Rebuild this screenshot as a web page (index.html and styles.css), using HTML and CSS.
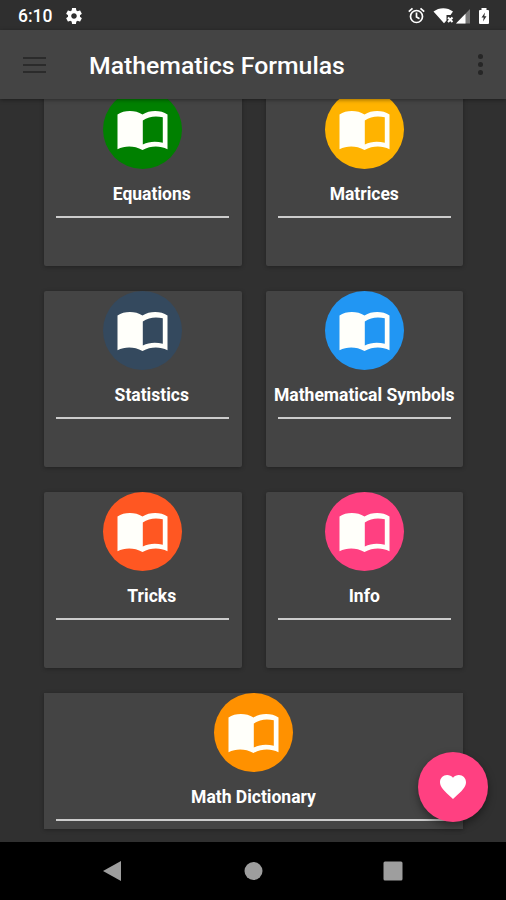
FILE: index.html
```html
<!DOCTYPE html>
<html lang="en">
<head>
    <meta charset="UTF-8">
    <title>Mathematics Formulas</title>
    <link rel="stylesheet" href="styles.css">
</head>
<body>
    <svg class="defs">
        <symbol id="book" viewBox="0 0 51 39">
            <path fill="currentColor" fill-rule="evenodd" d="M.5 3.500C7-.8 18-1.200 25.500 3.500C33-1.200 44-.8 50.500 3.500V38.200C43 34.700 34 34.500 25.500 39C17 34.500 8 34.700 .5 38.200ZM25.800 9.500V33.500C32 30.300 39 29.900 45.800 31.800V6.300C38.500 4.600 31.500 5.500 25.800 9.500Z"/>
        </symbol>
    </svg>

    <div class="status-bar">
        <span class="clock">6:10</span>
        <svg class="gear" viewBox="2 2 20 20"><path fill="#fff" d="M19.430 12.980c.04-.32.07-.64.07-.98s-.03-.66-.07-.98l2.110-1.650c.19-.15.24-.42.12-.64l-2-3.460c-.12-.22-.39-.3-.61-.22l-2.490 1c-.52-.4-1.080-.73-1.690-.98l-.38-2.650C14.460 2.180 14.250 2 14 2h-4c-.25 0-.46.18-.49.42l-.38 2.650c-.61.25-1.170.59-1.690.98l-2.490-1c-.23-.09-.49 0-.61.22l-2 3.460c-.13.22-.07.49.12.64l2.110 1.650c-.04.32-.07.65-.07.98s.03.66.07.98l-2.110 1.650c-.19.15-.24.42-.12.64l2 3.460c.12.22.39.3.61.22l2.490-1c.52.4 1.080.73 1.690.98l.38 2.650c.03.24.24.42.49.42h4c.25 0 .46-.18.49-.42l.38-2.650c.61-.25 1.170-.59 1.690-.98l2.490 1c.23.09.49 0 .61-.22l2-3.460c.12-.22.07-.49-.12-.64l-2.110-1.650zM12 15.500c-1.930 0-3.500-1.570-3.500-3.500s1.570-3.500 3.500-3.500 3.500 1.570 3.500 3.500-1.570 3.500-3.500 3.500z"/></svg>
        <svg class="system-icons" viewBox="0 0 84 20">
            <!-- alarm -->
            <g fill="none" stroke="#fff" stroke-width="1.700">
                <circle cx="8.500" cy="10.500" r="6"/>
                <path d="M.8 5.600L4.500 2.300M16.200 5.600L12.500 2.300M8.500 6.500V11L11.500 12.800"/>
            </g>
            <!-- wifi -->
            <path fill="#fff" d="M25.500 5.500C31 1 39.500 1 45 5.500L42.500 9H38.500V14.500L36 17.300Z"/>
            <path stroke="#fff" stroke-width="2" d="M40 11.500L44.500 16M44.500 11.500L40 16"/>
            <!-- signal -->
            <path fill="#777" d="M62 3V17.500H48Z"/>
            <path fill="#fff" d="M57.500 7.700V17.500H48Z"/>
            <!-- battery -->
            <path fill="#fff" d="M73.500 2H78.500V4H80Q81 4 81 5V17Q81 18 80 18H72Q71 18 71 17V5Q71 4 72 4H73.500Z"/>
            <path fill="#2f2f2f" d="M77 6.500L73.500 11.500H75.700L75 15.500L78.500 10.200H76.300Z"/>
        </svg>
    </div>

    <header class="toolbar">
        <div class="menu-icon"><i></i><i></i><i></i></div>
        <h1>Mathematics Formulas</h1>
        <div class="more-icon"><i></i><i></i><i></i></div>
    </header>

    <main>
        <div class="grid">
            <div class="card left">
                <div class="circle green"><svg class="book"><use href="#book"/></svg></div>
                <h2>Equations</h2>
                <hr>
            </div>
            <div class="card">
                <div class="circle amber"><svg class="book"><use href="#book"/></svg></div>
                <h2>Matrices</h2>
                <hr>
            </div>
            <div class="card left">
                <div class="circle navy"><svg class="book"><use href="#book"/></svg></div>
                <h2>Statistics</h2>
                <hr>
            </div>
            <div class="card">
                <div class="circle blue"><svg class="book"><use href="#book"/></svg></div>
                <h2>Mathematical Symbols</h2>
                <hr>
            </div>
            <div class="card left">
                <div class="circle red"><svg class="book"><use href="#book"/></svg></div>
                <h2>Tricks</h2>
                <hr>
            </div>
            <div class="card">
                <div class="circle pink"><svg class="book"><use href="#book"/></svg></div>
                <h2>Info</h2>
                <hr>
            </div>
            <div class="card wide">
                <div class="circle orange"><svg class="book"><use href="#book"/></svg></div>
                <h2>Math Dictionary</h2>
                <hr>
            </div>
        </div>
        <div class="fab">
            <svg viewBox="2 3 20 18.350"><path fill="#fff" d="M12 21.350l-1.450-1.320C5.400 15.360 2 12.280 2 8.500 2 5.420 4.420 3 7.500 3c1.740 0 3.410.81 4.500 2.090C13.090 3.810 14.760 3 16.500 3 19.580 3 22 5.420 22 8.500c0 3.780-3.400 6.860-8.550 11.540L12 21.350z"/></svg>
        </div>
    </main>

    <nav class="nav-bar">
        <svg viewBox="0 0 20 22"><path d="M18 1V21L0 11Z"/></svg>
        <svg viewBox="0 0 20 22"><circle cx="10.500" cy="11" r="9"/></svg>
        <svg viewBox="0 0 20 22"><rect x=".5" y="1.500" width="19" height="19" rx="1.500"/></svg>
    </nav>
</body>
</html>
```
FILE: styles.css
```css
* {
    box-sizing: border-box;
}

body {
    margin: 0;
    height: 900px;
    display: flex;
    flex-direction: column;
    overflow: hidden;
    background: #303030;
    color: #fff;
    font-family: Roboto, sans-serif;
}

.defs {
    display: none;
}

.status-bar {
    height: 30px;
    flex: none;
    display: flex;
    align-items: center;
    padding: 2px 14px 0 18px;
    background: #2f2f2f;
}

.clock {
    width: 48px;
    font-size: 17.5px;
    font-weight: 500;
}

.gear {
    width: 16px;
    height: 16px;
}

.system-icons {
    width: 84px;
    height: 20px;
    margin-left: auto;
}

.toolbar {
    position: relative;
    z-index: 1;
    height: 69px;
    flex: none;
    display: flex;
    align-items: center;
    padding: 0 23px;
    background: #444;
    box-shadow: 0 1px 4px rgba(0, 0, 0, 0.4);
}

.toolbar h1 {
    margin: 2px 0 0 43px;
    font-size: 24.8px;
    font-weight: 500;
    white-space: nowrap;
}

.menu-icon {
    width: 23px;
    display: grid;
    gap: 5px;
}

.menu-icon i {
    height: 2px;
    background: #2b2b2b;
}

.more-icon {
    display: grid;
    gap: 3px;
    margin-left: auto;
}

.more-icon i {
    width: 5px;
    height: 5px;
    border-radius: 50%;
    background: #262626;
}

main {
    position: relative;
    height: 743px;
    flex: none;
    overflow: hidden;
}

.grid {
    display: grid;
    grid-template-columns: repeat(2, minmax(0, 1fr));
    grid-template-rows: repeat(3, 176px) 136px;
    gap: 25px 24px;
    margin: -9px 43px 0 44px;
}

.card {
    display: flex;
    flex-direction: column;
    align-items: center;
    background: #444;
    border-radius: 2px;
    box-shadow: 0 1px 4px rgba(0, 0, 0, 0.3);
}

.wide {
    grid-column: span 2;
    border-radius: 0;
}

.circle {
    width: 79px;
    height: 79px;
    flex: none;
    display: flex;
    align-items: center;
    justify-content: center;
    padding-top: 2px;
    border-radius: 50%;
}

.green { background: #008000; }
.amber { background: #ffb300; }
.navy { background: #34495e; }
.blue { background: #2196f3; }
.red { background: #ff5722; }
.pink { background: #ff4081; }
.orange { background: #ff9100; }

.book {
    width: 51px;
    height: 39px;
    color: #fffffa;
}

.card h2 {
    margin: 14px 0 0;
    font-size: 17.5px;
    font-weight: 700;
    line-height: 22px;
    white-space: nowrap;
}

.left h2 {
    padding-left: 18px;
}

.card hr {
    width: 173px;
    height: 2px;
    margin: 11px 0 0;
    border: 0;
    background: #ccc;
}

.card.wide hr {
    width: calc(100% - 24px);
}

.fab {
    position: absolute;
    right: 18px;
    bottom: 20px;
    width: 70px;
    height: 70px;
    display: flex;
    align-items: center;
    justify-content: center;
    border-radius: 50%;
    background: #ff4081;
    box-shadow: 0 4px 8px rgba(0, 0, 0, 0.4);
}

.fab svg {
    width: 26px;
    height: 24px;
}

.nav-bar {
    flex: 1;
    display: flex;
    justify-content: center;
    align-items: center;
    gap: 120px;
    background: #000;
}

.nav-bar svg {
    width: 20px;
    height: 22px;
    fill: #9e9e9e;
}
```
